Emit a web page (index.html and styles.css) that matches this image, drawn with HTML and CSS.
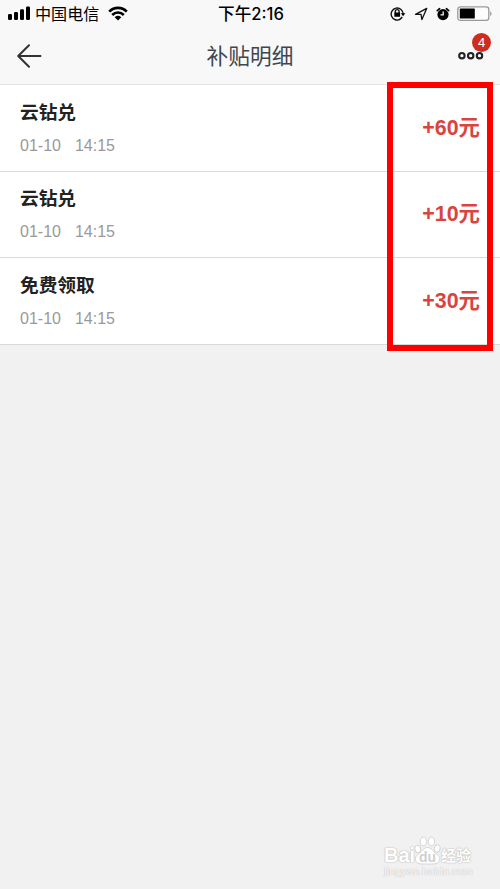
FILE: index.html
```html
<!DOCTYPE html>
<html lang="zh-CN">
<head>
<meta charset="utf-8">
<title>补贴明细</title>
<link rel="stylesheet" href="styles.css">
</head>
<body>
<div class="screen">
  <header class="top">
    <div class="status">
      <div class="status-left">
        <svg class="signal" width="23" height="14" viewBox="0 0 23 14"><rect x="0" y="8" width="4" height="6" rx="1.2"/><rect x="6" y="6" width="4" height="8" rx="1.2"/><rect x="12" y="3.3" width="4" height="10.7" rx="1.2"/><rect x="18" y="0.6" width="4" height="13.4" rx="1.2"/></svg>
        <span class="carrier">中国电信</span>
        <svg class="wifi" width="20" height="15" viewBox="0 0 20 15"><g fill="none" stroke="#000" stroke-width="2.6"><path d="M1.2 5.6C6.2.6 13.8.6 18.8 5.6"/><path d="M4.2 9C7.6 5.7 12.4 5.7 15.8 9"/></g><path d="M6.7 11.2Q10 8.5 13.3 11.2L10 14.5Z"/></svg>
      </div>
      <span class="clock">下午2:16</span>
      <div class="status-right">
        <svg width="16" height="16" viewBox="0 0 16 16"><g fill="none" stroke="#111" stroke-width="1.4"><path d="M10.3 13.2A6 6 0 1 1 13.2 8M12.2 10.9A6 6 0 0 1 9.5 13.5"/><path d="M5.3 7V5.5a1.9 1.9 0 0 1 3.8 0V7"/></g><rect x="4.3" y="6.5" width="5.8" height="4.3" rx=".4"/><path d="M10.8 7.2h4.6l-2.300 3Z"/></svg>
        <svg width="14" height="14" viewBox="0 0 14 14"><path d="M1.5 7.3 12.7 1.4 7.9 12.6 7 7.3Z" fill="none" stroke="#111" stroke-width="1.3" stroke-linejoin="round"/></svg>
        <svg width="14" height="14" viewBox="0 0 14 14"><circle cx="7" cy="7.6" r="5.6"/><path d="M1.3 3.7 3.6 1.7M12.7 3.7 10.4 1.7" stroke="#000" stroke-width="1.7" stroke-linecap="round"/><path d="M7.2 4.4v3.5H4.5" fill="none" stroke="#f8f8f8" stroke-width="1.3"/></svg>
        <svg class="battery" width="36" height="16" viewBox="0 0 36 16"><rect x=".8" y=".8" width="31" height="13.6" rx="2.6" fill="#fcfcfc" stroke="#999" stroke-width="1.3"/><rect x="2.8" y="2.6" width="15" height="10" rx=".6"/><path d="M33.3 5q2.4 2.6 0 5.2Z" fill="#888"/></svg>
      </div>
    </div>
    <nav class="nav">
      <svg class="back" width="26" height="26" viewBox="0 0 26 26"><path d="M13 2.2 2.2 13 13 23.8M2.6 13H24.5" fill="none" stroke="#333" stroke-width="2" stroke-linecap="round" stroke-linejoin="round"/></svg>
      <h1 class="title">补贴明细</h1>
      <div class="more">
        <svg width="26" height="9" viewBox="0 0 26 9"><g fill="none" stroke="#222" stroke-width="2.1"><circle cx="3.9" cy="4.7" r="2.7"/><circle cx="12.7" cy="4.7" r="2.7"/><circle cx="21.5" cy="4.7" r="2.7"/></g></svg>
        <span class="badge">4</span>
      </div>
    </nav>
  </header>
  <main class="list">
    <div class="row">
      <div><div class="name">云钻兑</div><div class="date"><span>01-10</span><span>14:15</span></div></div>
      <div class="amount">+60元</div>
    </div>
    <div class="row">
      <div><div class="name">云钻兑</div><div class="date"><span>01-10</span><span>14:15</span></div></div>
      <div class="amount">+10元</div>
    </div>
    <div class="row">
      <div><div class="name">免费领取</div><div class="date"><span>01-10</span><span>14:15</span></div></div>
      <div class="amount">+30元</div>
    </div>
  </main>
  <div class="highlight"></div>
  <div class="watermark">
    <div class="brand">
      <span class="bai">Bai</span>
      <span class="paw"><svg width="27" height="29" viewBox="0 0 27 29"><g fill="#fff" stroke="#d4d4d4" stroke-width="1"><ellipse cx="3.8" cy="13" rx="2.9" ry="3.7" transform="rotate(-12 3.8 13)"/><ellipse cx="9.3" cy="5.5" rx="3.1" ry="4.3"/><ellipse cx="17.5" cy="5.5" rx="3.1" ry="4.3"/><ellipse cx="23.2" cy="12.5" rx="2.9" ry="3.7" transform="rotate(12 23.2 12.5)"/><path d="M13.5 11.5C9.500 11.500 8 15.500 5 17.500C1.500 20 .6 22.500 2 25.500C3.500 28.500 8 28 13.500 28S23.500 28.500 25 25.500C26.400 22.500 25.500 20 22 17.500C19 15.500 17.500 11.500 13.500 11.500Z"/></g></svg><span class="du">du</span></span>
      <span class="exp">经验</span>
    </div>
    <div class="site">jingyan.baidu.com</div>
  </div>
</div>
</body>
</html>
```
FILE: styles.css
```css
* { box-sizing: border-box; }
body {
  margin: 0;
  background: #f1f1f1;
  font-family: "Liberation Sans", "Noto Sans CJK SC", sans-serif;
}
.screen { position: relative; height: 889px; overflow: hidden; }
svg { display: block; flex: none; }
.top { height: 85px; background: #f8f8f8; border-bottom: 1px solid #e3e3e3; }
.status {
  height: 27px;
  display: grid;
  grid-template-columns: 1fr auto 1fr;
  align-items: center;
  padding: 0 6px 0 8px;
  color: #000;
}
.status-left, .status-right { display: flex; align-items: center; }
.signal { margin-top: -1px; }
.carrier { font-size: 16.1px; line-height: 26px; margin: 1px 0 0 4px; }
.wifi { margin: -1px 0 0 9px; }
.clock { font: 500 16.6px/26px Inter, "Noto Sans CJK SC", sans-serif; }
.status-right { justify-content: flex-end; gap: 8px; }
.battery { margin: 0 1px 0 -1px; }
.nav {
  height: 57px;
  display: grid;
  grid-template-columns: 1fr auto 1fr;
  align-items: center;
  padding: 0 16px;
}
.title { margin: 2px 0 0; font-size: 21.7px; line-height: 32px; font-weight: 400; color: #40464e; }
.more { position: relative; justify-self: end; }
.badge {
  position: absolute;
  left: 14px;
  top: -18px;
  width: 19px;
  height: 19px;
  border-radius: 50%;
  background: #cf2c20;
  color: #fff;
  font-size: 13px;
  line-height: 20px;
  text-align: center;
}
.list { background: #fff; }
.row {
  height: 86.6px;
  border-bottom: 1px solid #d9d9d9;
  padding: 0 20px;
  display: flex;
  justify-content: space-between;
  align-items: center;
}
.name { font-size: 18.7px; line-height: 28px; font-weight: 700; color: #222; }
.date { display: flex; gap: 14px; margin-top: 8px; font-size: 16px; line-height: 22px; color: #999; }
.amount { font-size: 21.4px; line-height: 30px; font-weight: 700; color: #d9443f; }
.highlight {
  position: absolute;
  left: 387px;
  top: 82px;
  width: 106px;
  height: 269px;
  border: 6px solid #f00;
}
.watermark {
  position: absolute;
  left: 384px;
  top: 835px;
  width: 92px;
  color: #fff;
  text-shadow: 0 0 1px #bbb, 0 0 1px #bbb, 0 0 2px #ccc;
}
.brand { display: flex; align-items: flex-end; height: 30px; }
.bai { font-size: 20px; line-height: 20px; font-weight: 700; width: 30px; }
.paw { position: relative; }
.du { position: absolute; left: 5px; top: 14px; font-size: 14px; line-height: 14px; font-weight: 700; color: #d0d0d0; text-shadow: none; }
.exp { font-size: 15px; line-height: 18px; font-weight: 700; margin: 0; white-space: nowrap; }
.site { font-size: 11px; line-height: 13px; color: #fafafa; text-shadow: 0 0 1px #bbb, 0 0 1px #ccc; }
```
